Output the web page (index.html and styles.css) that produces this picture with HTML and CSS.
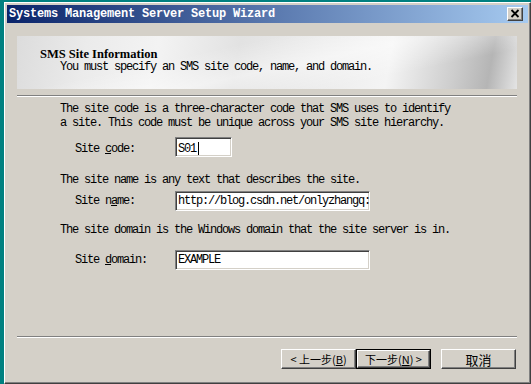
FILE: index.html
```html
<!DOCTYPE html>
<html lang="en">
<head>
  <meta charset="UTF-8" />
  <title>Systems Management Server Setup Wizard</title>
  <link rel="stylesheet" href="styles.css">
</head>
<body>
  <div class="window">
    <div class="titlebar">
      <span class="title">Systems Management Server Setup Wizard</span>
      <div class="close">
        <svg width="10" height="9" viewBox="0 0 10 9"><path d="M1.5 1 L8.5 8 M8.5 1 L1.5 8" stroke="#000" stroke-width="1.8" fill="none"/></svg>
      </div>
    </div>

    <div class="banner">
      <div class="banner-title">SMS Site Information</div>
      <div class="banner-sub">You must specify an SMS site code, name, and domain.</div>
    </div>
    <div class="sep"></div>

    <div class="content">
      <p class="para first">The site code is a three-character code that SMS uses to identify<br>a site. This code must be unique across your SMS site hierarchy.</p>
      <div class="field code">
        <span class="label">Site <u>c</u>ode:</span>
        <div class="input short">S01<span class="caret"></span></div>
      </div>

      <p class="para name">The site name is any text that describes the site.</p>
      <div class="field name">
        <span class="label">Site n<u>a</u>me:</span>
        <div class="input">http://blog.csdn.net/onlyzhangq:</div>
      </div>

      <p class="para domain">The site domain is the Windows domain that the site server is in.</p>
      <div class="field domain">
        <span class="label">Site <u>d</u>omain:</span>
        <div class="input">EXAMPLE</div>
      </div>
    </div>

    <div class="sep bottom"></div>

    <div class="buttons">
      <div class="btn back">&lt; 上一步(<u>B</u>)</div>
      <div class="default"><div class="btn next">下一步(<u>N</u>) &gt;</div></div>
      <div class="btn cancel">取消</div>
    </div>
  </div>
</body>
</html>
```

FILE: styles.css
```css
* { margin: 0; padding: 0; box-sizing: border-box; }
body {
  background: #008080;
  font-family: 'Liberation Mono', monospace;
  font-size: 12px;
  letter-spacing: -1.2px;
  color: #000;
}
.window {
  margin: 2px 0 0 4px;
  width: 527px;
  height: 382px;
  background: #d4d0c8;
  border: 1px solid;
  border-color: #fff #404040 #404040 #fff;
  box-shadow: inset -1px -1px #808080;
  padding: 2px;
}
.titlebar {
  height: 18px;
  background: linear-gradient(90deg, #0a246a, #a6caf0);
  display: flex;
  align-items: center;
  justify-content: space-between;
  padding: 0 5px 0 2px;
}
.title {
  color: #fff;
  font-weight: bold;
  letter-spacing: -0.2px;
  line-height: 12px;
}
.close {
  width: 16px;
  height: 14px;
  background: #d4d0c8;
  border: 1px solid;
  border-color: #fff #404040 #404040 #fff;
  box-shadow: inset -1px -1px #808080;
  display: flex;
  align-items: center;
  justify-content: center;
  padding: 0 1px 1px 0;
}
.banner {
  margin: 13px 11px 0 10px;
  height: 53px;
  padding-top: 12px;
  background:
    linear-gradient(168deg, rgba(255,255,255,0) 35%, rgba(255,255,255,.45) 55%, rgba(255,255,255,0) 75%),
    linear-gradient(100deg, #dcdcdc 0%, #ebebeb 14%, #f3f3f3 28%, #e2e2e2 44%, #ececec 60%, #f4f4f4 74%, #cdcdcd 87%, #b5b5b5 94%, #e4e4e4 100%);
}
.banner-title {
  font-family: 'Liberation Serif', serif;
  font-weight: bold;
  font-size: 12.5px;
  letter-spacing: 0;
  line-height: 13px;
  padding-left: 23px;
}
.banner-sub {
  line-height: 12px;
  padding-left: 43px;
}
.sep {
  margin: 6px 11px 0 10px;
  height: 2px;
  border-top: 1px solid #808080;
  border-bottom: 1px solid #fff;
}
.sep.bottom {
  margin-top: 66px;
}
.content {
  padding-left: 53px;
}
.para {
  line-height: 12px;
}
.para.first { margin-top: 6px; line-height: 13.6px; }
.para.name { margin-top: 17px; }
.para.domain { margin-top: 13px; }
.field {
  display: flex;
  align-items: baseline;
  padding-left: 15px;
}
.field.code { margin-top: 7px; }
.field.name { margin-top: 5px; }
.field.domain { margin-top: 14px; }
.label {
  width: 100px;
}
.input {
  width: 195px;
  height: 20px;
  background: #fff;
  border: 1px solid;
  border-color: #808080 #fff #fff #808080;
  box-shadow: inset 1px 1px #404040, inset -1px -1px #d4d0c8;
  padding: 4px 2px 0;
  line-height: 11px;
  white-space: nowrap;
  overflow: hidden;
}
.input.short {
  width: 57px;
}
.caret {
  display: inline-block;
  width: 1px;
  height: 13px;
  background: #000;
  vertical-align: -3px;
  margin-left: 2px;
}
.buttons {
  display: flex;
  justify-content: flex-end;
  margin-top: 11px;
  padding-right: 12px;
}
.btn {
  width: 75px;
  height: 20px;
  background: #d4d0c8;
  border: 1px solid;
  border-color: #fff #404040 #404040 #fff;
  box-shadow: inset -1px -1px #808080;
  display: flex;
  align-items: center;
  justify-content: center;
  font-family: 'Noto Sans CJK SC', sans-serif;
  font-size: 11px;
  letter-spacing: 0;
}
.default {
  border: 1px solid #000;
}
.default .btn {
  width: 73px;
  height: 18px;
}
.btn.cancel {
  margin-left: 10px;
  font-size: 13px;
}
```
